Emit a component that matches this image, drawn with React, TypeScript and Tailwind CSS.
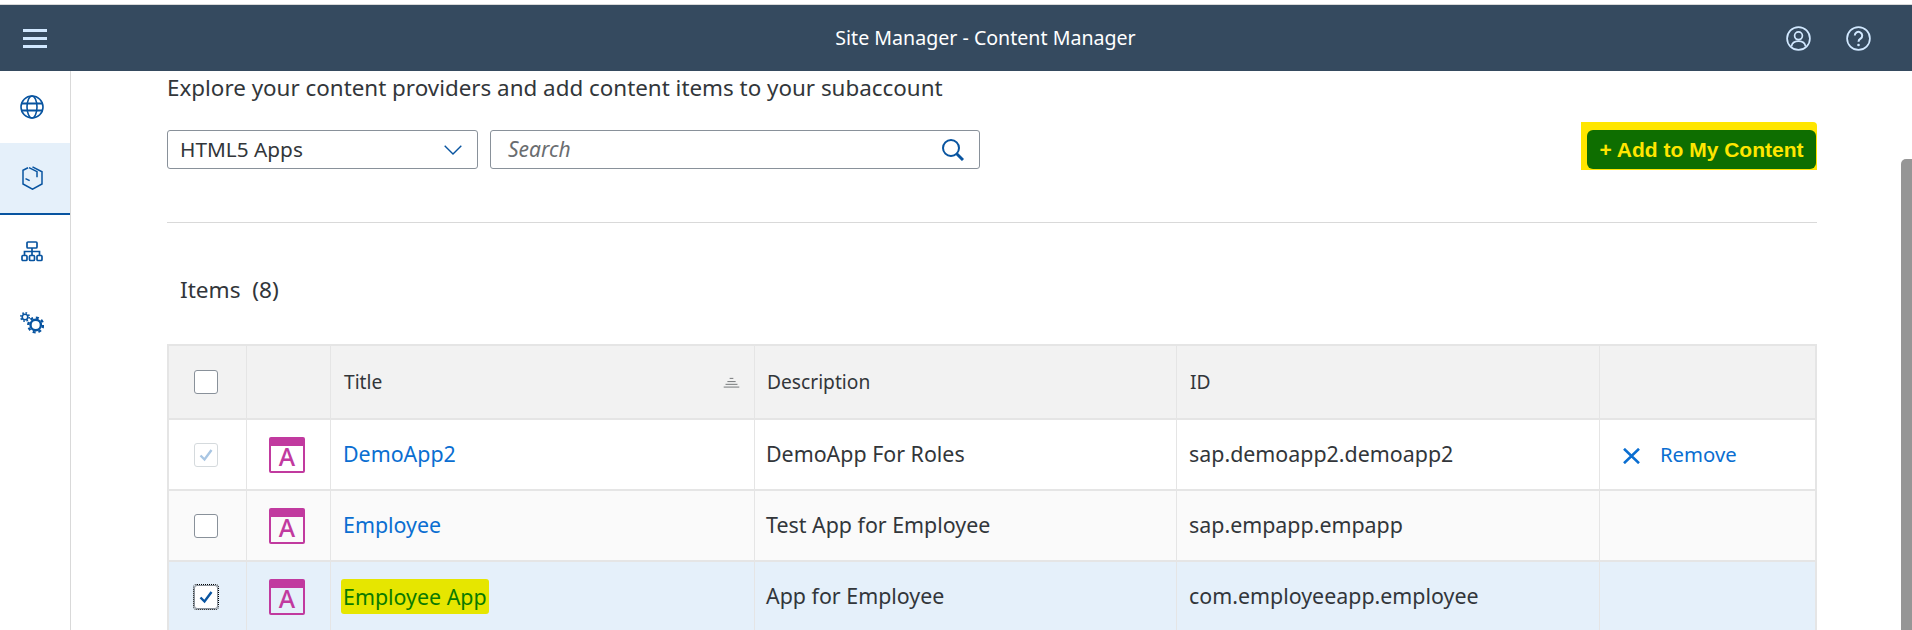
import React from 'react'

const font = "font-['Noto_Sans',sans-serif]"

function Checkbox({ state }: { state: 'empty' | 'disabled' | 'checked' }) {
  if (state === 'disabled') {
    return (
      <div className="w-6 h-6 rounded-[3px] border border-[#d5dadd] bg-white flex items-center justify-center">
        <svg viewBox="0 0 16 16" className="w-4 h-4 text-[#a9c6e3]" fill="none" stroke="currentColor" strokeWidth="2.4">
          <path d="M2.5 8.5 6.5 12.5 13.5 3" />
        </svg>
      </div>
    )
  }
  if (state === 'checked') {
    return (
      <div className="w-6 h-6 rounded-[3px] border border-[#89919a] bg-white flex items-center justify-center outline outline-dotted outline-black">
        <svg viewBox="0 0 16 16" className="w-4 h-4 text-[#0854a0]" fill="none" stroke="currentColor" strokeWidth="2.4">
          <path d="M2.5 8.5 6.5 12.5 13.5 3" />
        </svg>
      </div>
    )
  }
  return <div className="w-6 h-6 rounded-[3px] border border-[#89919a] bg-white" />
}

function AppIcon() {
  return (
    <div className="w-9 h-9 rounded-[2px] border-2 border-t-[9px] border-[#c13a9f] flex items-center justify-center overflow-hidden">
      <span className="text-[25px] font-medium leading-none text-[#c13a9f] -mt-[3px]">A</span>
    </div>
  )
}

const rows = [
  { check: 'disabled' as const, title: 'DemoApp2', desc: 'DemoApp For Roles', id: 'sap.demoapp2.demoapp2', remove: true, bg: 'bg-white' },
  { check: 'empty' as const, title: 'Employee', desc: 'Test App for Employee', id: 'sap.empapp.empapp', remove: false, bg: 'bg-[#fafafa]' },
  { check: 'checked' as const, title: 'Employee App', desc: 'App for Employee', id: 'com.employeeapp.employee', remove: false, bg: 'bg-[#e5f0fa]', marked: true },
]

export default function App() {
  return (
    <div className={`${font} w-[1912px] h-[630px] overflow-hidden bg-white flex flex-col text-[#32363a]`}>
      {/* Shell bar */}
      <div className="h-[5px] bg-white border-b border-[#d9d9d9]" />
      <header className="h-[66px] bg-[#354a5f] flex items-center text-white">
        <div className="w-[70px] flex justify-center pr-px">
          <div className="w-6 flex flex-col gap-[5px]">
            <div className="h-[3px] bg-[#d1e8ff]" />
            <div className="h-[3px] bg-[#d1e8ff]" />
            <div className="h-[3px] bg-[#d1e8ff]" />
          </div>
        </div>
        <div className="flex-1 pl-[126px] text-center text-[19.6px]">Site Manager - Content Manager</div>
        <div className="w-[137px] flex items-center gap-[35px] pl-[11px] text-[#d1e8ff]">
          <svg viewBox="0 0 25 25" className="w-[25px] h-[25px]" fill="none" stroke="currentColor" strokeWidth="1.7">
            <circle cx="12.5" cy="12.5" r="11.4" />
            <circle cx="12.5" cy="9.8" r="3.9" />
            <path d="M5.5 20.5C6 16.5 9 15.2 12.5 15.2S19 16.5 19.5 20.5" />
          </svg>
          <svg viewBox="0 0 25 25" className="w-[25px] h-[25px]" fill="none" stroke="currentColor" strokeWidth="1.7">
            <circle cx="12.5" cy="12.5" r="11.4" />
            <path d="M8.8 9.6A3.7 3.7 0 1 1 14.6 12.6C13.3 13.5 12.5 14 12.5 15.8" strokeWidth="2" />
            <circle cx="12.5" cy="19" r="1.3" fill="currentColor" stroke="none" />
          </svg>
        </div>
      </header>

      <div className="flex-1 flex min-h-0">
        {/* Side nav */}
        <nav className="w-[71px] shrink-0 border-r border-[#d9d9d9] text-[#0854a0]">
          <div className="h-[72px] flex items-center justify-center pr-[6px]">
            <svg viewBox="0 0 24 24" className="w-6 h-6" fill="none" stroke="currentColor" strokeWidth="1.6">
              <circle cx="12" cy="12" r="11" />
              <ellipse cx="12" cy="12" rx="5" ry="11" />
              <path d="M1.5 8.5h21M1.5 15.5h21" strokeWidth="2" />
            </svg>
          </div>
          <div className="h-[72px] bg-[#e5f0fa] border-b-2 border-[#0854a0] flex items-center justify-center pr-[6px]">
            <svg viewBox="0 0 21 24" className="w-[21px] h-6" fill="none" stroke="currentColor" strokeWidth="1.5">
              <path d="M6 1.8 1 4.2V18L10.5 23.2 20 18V5.8L10.5 0.8" />
              <path d="M7 1.6 15 5.6V11.2" />
              <path d="M3.5 12.6 7.7 14.6" />
            </svg>
          </div>
          <div className="h-[72px] flex items-center justify-center pr-[6px]">
            <svg viewBox="0 0 22 21" className="w-[22px] h-[21px]" fill="none" stroke="currentColor" strokeWidth="1.7">
              <rect x="6" y="1" width="10" height="6" rx="1" />
              <path d="M11 7v7M3.5 14v-3.5h15V14" />
              <rect x="1" y="14.5" width="5" height="5" rx="1" />
              <rect x="8.5" y="14.5" width="5" height="5" rx="1" />
              <rect x="16" y="14.5" width="5" height="5" rx="1" />
            </svg>
          </div>
          <div className="h-[72px] flex items-center justify-center pr-[6px]">
            <svg viewBox="0 0 24 22" className="w-6 h-[22px]" fill="none" stroke="currentColor">
              <circle cx="5" cy="5" r="2.8" strokeWidth="1.6" />
              <circle cx="5" cy="5" r="4.2" strokeWidth="1.6" strokeDasharray="1.6 1.7" />
              <circle cx="15.7" cy="13" r="5.2" strokeWidth="2.4" />
              <circle cx="15.7" cy="13" r="7.4" strokeWidth="2.4" strokeDasharray="3 2.8" />
            </svg>
          </div>
        </nav>

        {/* Main content */}
        <main className="w-[1746px] shrink-0 pl-[96px]">
          <p className="mt-[3px] text-[22.4px] leading-7">Explore your content providers and add content items to your subaccount</p>

          <div className="mt-[20px] w-[1650px] flex items-start">
            <div className="mt-[8px] w-[311px] h-[39px] rounded-[3px] border border-[#89919a] flex items-center justify-between pl-[12px] pr-[15px] text-[20.8px]">
              <span>HTML5 Apps</span>
              <svg viewBox="0 0 18 10" className="w-[18px] h-[10px] text-[#0854a0]" fill="none" stroke="currentColor" strokeWidth="1.4">
                <path d="M0.7 0.7 9 9 17.3 0.7" />
              </svg>
            </div>
            <div className="mt-[8px] ml-3 w-[490px] h-[39px] rounded-[3px] border border-[#89919a] flex items-center justify-between pl-[17px] pr-[15px] text-[21px]">
              <span className="italic text-[#6a6d70]">Search</span>
              <svg viewBox="0 0 22 22" className="w-[22px] h-[22px] text-[#0854a0]" fill="none" stroke="currentColor" strokeWidth="2">
                <circle cx="9" cy="9" r="8" />
                <path d="M14.7 14.7 21 21" strokeWidth="3" />
              </svg>
            </div>
            <div className="ml-auto w-[236px] h-[48px] bg-[#ffe600] rounded-tr-[4px] pl-[6px]">
              <div className="mt-[8px] h-[39px] w-[229px] rounded-[6px] bg-[#0e6e00] flex items-center justify-center font-['Liberation_Sans',sans-serif] font-bold text-[21px] text-[#ffe600]">
                + Add to My Content
              </div>
            </div>
          </div>

          <div className="mt-[52px] w-[1650px] border-t border-[#d9d9d9]" />

          <h2 className="mt-[51px] pl-[13px] text-[22.6px] leading-8 whitespace-pre">Items  (8)</h2>

          {/* Items table */}
          <div className="mt-[38px] w-[1650px] border-t-2 border-l-2 border-[#e5e5e5]">
            <div className="grid grid-cols-[78px_84px_424px_422px_423px_217px] h-[74px] bg-[#f2f2f2] text-[19.2px]">
              <div className="border-r border-b-2 border-[#e5e5e5] flex items-center justify-center pr-[3px]">
                <Checkbox state="empty" />
              </div>
              <div className="border-r border-b-2 border-[#e5e5e5]" />
              <div className="border-r border-b-2 border-[#e5e5e5] flex items-center justify-between pl-[13px] pr-[14px]">
                <span>Title</span>
                <svg viewBox="0 0 18 12" className="w-[17px] h-[11px] text-[#6a6d70]" fill="none" stroke="currentColor" strokeWidth="1">
                  <path d="M7 1.5h4M4.5 5h9M2.5 8h13M0.5 11h17" />
                </svg>
              </div>
              <div className="border-r border-b-2 border-[#e5e5e5] flex items-center pl-[12px]">Description</div>
              <div className="border-r border-b-2 border-[#e5e5e5] flex items-center pl-[13px]">ID</div>
              <div className="border-r-2 border-b-2 border-[#e5e5e5]" />
            </div>
            {rows.map((r) => (
              <div key={r.title} className={`grid grid-cols-[78px_84px_424px_422px_423px_217px] h-[71px] text-[21.4px] ${r.bg}`}>
                <div className="border-r border-b-2 border-[#e5e5e5] flex items-center justify-center pr-[4px]">
                  <Checkbox state={r.check} />
                </div>
                <div className="border-r border-b-2 border-[#e5e5e5] flex items-center justify-center pr-[3px]">
                  <AppIcon />
                </div>
                <div className="border-r border-b-2 border-[#e5e5e5] flex items-center pl-[12px]">
                  {r.marked ? (
                    <span className="-ml-[2px] bg-[#e6e600] text-[#0a7a00] rounded-[3px] px-[2px] leading-[35px]">{r.title}</span>
                  ) : (
                    <a href="#" className="text-[#0a6ed1]">{r.title}</a>
                  )}
                </div>
                <div className="border-r border-b-2 border-[#e5e5e5] flex items-center pl-[11px]">{r.desc}</div>
                <div className="border-r border-b-2 border-[#e5e5e5] flex items-center pl-[12px]">{r.id}</div>
                <div className="border-r-2 border-b-2 border-[#e5e5e5] flex items-center pl-[23px] text-[20.3px] text-[#0a6ed1]">
                  {r.remove && (
                    <>
                      <svg viewBox="0 0 17 16" className="w-[17px] h-4 mt-[2px]" fill="none" stroke="currentColor" strokeWidth="2.6">
                        <path d="M1 0.8 16 15.2M16 0.8 1 15.2" />
                      </svg>
                      <span className="ml-[20px]">Remove</span>
                    </>
                  )}
                </div>
              </div>
            ))}
          </div>
        </main>

        {/* Scrollbar thumb */}
        <div className="ml-[84px] mt-[88px] w-[11px] bg-[#969696] rounded-tl-[5px]" />
      </div>
    </div>
  )
}
